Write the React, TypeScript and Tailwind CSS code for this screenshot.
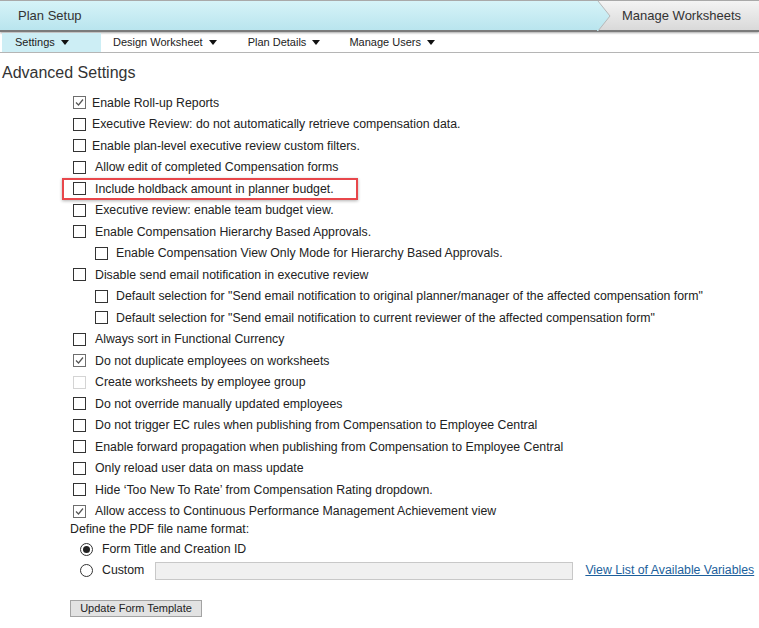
import React from 'react';

type Row = { label: string; checked?: boolean; disabled?: boolean; indent?: boolean; tight?: boolean; highlight?: boolean };

const rows: Row[] = [
  { label: 'Enable Roll-up Reports', checked: true, tight: true },
  { label: 'Executive Review: do not automatically retrieve compensation data.', tight: true },
  { label: 'Enable plan-level executive review custom filters.', tight: true },
  { label: 'Allow edit of completed Compensation forms' },
  { label: 'Include holdback amount in planner budget.', highlight: true },
  { label: 'Executive review: enable team budget view.' },
  { label: 'Enable Compensation Hierarchy Based Approvals.' },
  { label: 'Enable Compensation View Only Mode for Hierarchy Based Approvals.', indent: true },
  { label: 'Disable send email notification in executive review' },
  { label: 'Default selection for "Send email notification to original planner/manager of the affected compensation form"', indent: true },
  { label: 'Default selection for "Send email notification to current reviewer of the affected compensation form"', indent: true },
  { label: 'Always sort in Functional Currency' },
  { label: 'Do not duplicate employees on worksheets', checked: true },
  { label: 'Create worksheets by employee group', disabled: true },
  { label: 'Do not override manually updated employees' },
  { label: 'Do not trigger EC rules when publishing from Compensation to Employee Central' },
  { label: 'Enable forward propagation when publishing from Compensation to Employee Central' },
  { label: 'Only reload user data on mass update' },
  { label: 'Hide ‘Too New To Rate’ from Compensation Rating dropdown.' },
  { label: 'Allow access to Continuous Performance Management Achievement view', checked: true },
];

const Check: React.FC<{ checked?: boolean; disabled?: boolean }> = ({ checked, disabled }) => (
  <span
    className={`flex h-[13px] w-[13px] shrink-0 items-center justify-center border bg-white ${
      disabled ? 'border-[#d4d4d4]' : checked ? 'border-[#6e6e6e]' : 'border-[#333]'
    }`}
  >
    {checked && (
      <svg width="9" height="9" viewBox="0 0 9 9">
        <path d="M1 4.5 L3.5 7 L8 1.5" fill="none" stroke="#555" strokeWidth="1.2" />
      </svg>
    )}
  </span>
);

const Radio: React.FC<{ checked?: boolean }> = ({ checked }) => (
  <span className="flex h-[13px] w-[13px] shrink-0 items-center justify-center rounded-full border border-[#333] bg-white">
    {checked && <span className="h-[7px] w-[7px] rounded-full bg-[#222]" />}
  </span>
);

const Caret = () => (
  <svg width="8" height="5" viewBox="0 0 8 5" className="ml-[6px]">
    <path d="M0 0 L8 0 L4 5 Z" fill="#111" />
  </svg>
);

export default function App() {
  return (
    <div className="min-h-screen bg-white text-[#222]" style={{ fontFamily: 'Arial, "Liberation Sans", sans-serif' }}>
      {/* top bar */}
      <div className="flex h-[32px] border-t border-[#a9a9a9] border-b-2 border-b-[#7b7b7b] shadow-[0_1px_2px_rgba(0,0,0,0.35)]">
        <div className="flex flex-1 items-center bg-gradient-to-b from-[#d6f3f8] to-[#b9e5ee] pl-[18px] text-[13px] text-[#333]">
          Plan Setup
        </div>
        <div className="flex w-[162px] items-center bg-gradient-to-b from-[#f4f4f4] to-[#d9d9d9]">
          <svg width="14" height="30" viewBox="0 0 14 30" className="shrink-0">
            <defs>
              <linearGradient id="cy" x1="0" y1="0" x2="0" y2="1">
                <stop offset="0" stopColor="#d6f3f8" />
                <stop offset="1" stopColor="#b9e5ee" />
              </linearGradient>
            </defs>
            <path d="M0 0 L1 0 L13 15 L1 30 L0 30 Z" fill="url(#cy)" />
            <path d="M1 0 L13 15 L1 30" fill="none" stroke="#b7b7b7" strokeWidth="1" />
          </svg>
          <span className="ml-[11px] text-[13px] text-[#333]">Manage Worksheets</span>
        </div>
      </div>
      {/* tabs */}
      <div className="mt-px flex h-[20px] border-b border-[#b5b5b5] text-[11px] text-[#222]">
        <div className="ml-[2px] flex w-[99px] items-center bg-[#cdeef5] pl-[13px]">
          Settings<Caret />
        </div>
        <div className="flex items-center pl-[12px]">Design Worksheet<Caret /></div>
        <div className="flex items-center pl-[31px]">Plan Details<Caret /></div>
        <div className="flex items-center pl-[29px]">Manage Users<Caret /></div>
      </div>

      <h1 className="mt-[10px] pl-[2px] text-[16px] leading-[20px] text-[#333]">Advanced Settings</h1>

      <div className="mt-[9px] flex flex-col text-[12.3px]">
        {rows.map((r, i) => (
          <div key={i} className={`flex h-[21.5px] items-center ${r.indent ? 'pl-[95px]' : 'pl-[73px]'}`}>
            {r.highlight ? (
              <div className="-ml-[11px] flex h-[22px] w-[296px] items-center border-2 border-[#e8474b] pl-[9px] shadow-[0_1px_3px_rgba(0,0,0,0.3)]">
                <Check />
                <span className="ml-[9px]">{r.label}</span>
              </div>
            ) : (
              <>
                <Check checked={r.checked} disabled={r.disabled} />
                <span className={r.tight ? 'ml-[6px]' : r.indent ? 'ml-[8px]' : 'ml-[9px]'}>{r.label}</span>
              </>
            )}
          </div>
        ))}
      </div>

      <div className="pl-[70px] text-[12.3px] leading-[14px]">Define the PDF file name format:</div>
      <div className="mt-[3px] flex flex-col text-[12.3px]">
        <div className="flex h-[21px] items-center pl-[80px]">
          <Radio checked />
          <span className="ml-[9px]">Form Title and Creation ID</span>
        </div>
        <div className="flex h-[21px] items-center pl-[80px]">
          <Radio />
          <span className="ml-[9px]">Custom</span>
          <div className="ml-[11px] h-[18px] w-[418px] border border-[#c8c8c8] bg-[#f0f0f0]" />
          <a href="#" className="ml-[12px] text-[#1c5f9c] underline">View List of Available Variables</a>
        </div>
      </div>
      <div className="mt-[14px] pl-[70px]">
        <button className="h-[17px] w-[132px] border border-[#a3a3a3] bg-[#e2e2e2] text-[11px] leading-[15px] text-[#222]">
          Update Form Template
        </button>
      </div>
    </div>
  );
}
